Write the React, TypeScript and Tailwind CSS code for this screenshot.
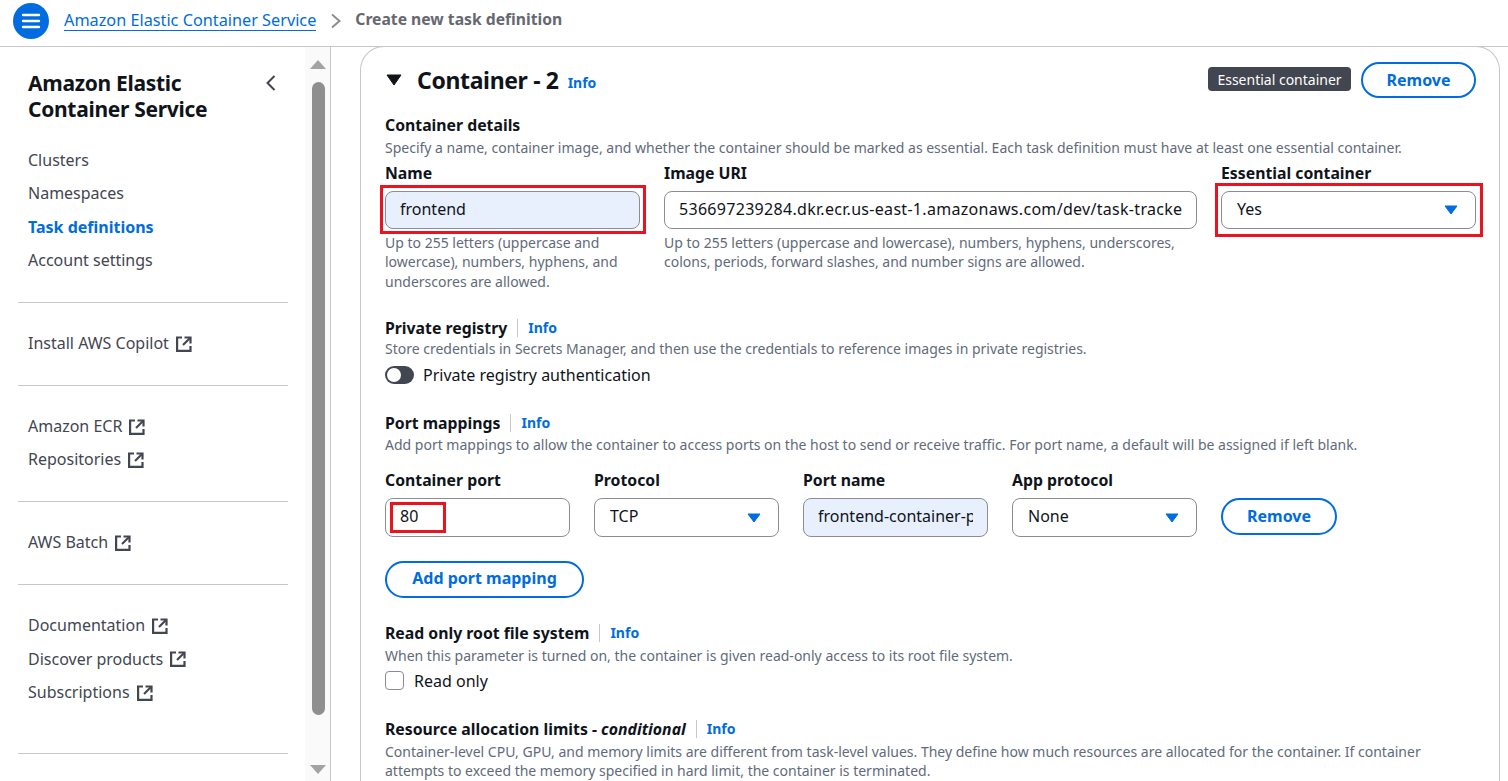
import React from "react";

const navGroups = [
  ["Install AWS Copilot"],
  ["Amazon ECR", "Repositories"],
  ["AWS Batch"],
  ["Documentation", "Discover products", "Subscriptions"],
];

function ExternalIcon() {
  return (
    <svg width="18" height="18" viewBox="0 0 18 18" fill="none" stroke="#424650" strokeWidth="2.2" className="shrink-0">
      <path d="M7 2.5H2.1v13.4h13.4V11" />
      <path d="M9.5 2.5h6v6" />
      <path d="M15 3 8 10" />
    </svg>
  );
}

function Info() {
  return <a className="text-[14px] font-bold leading-5 text-[#006ce0]">Info</a>;
}

function SectionTitle({ children }: { children: React.ReactNode }) {
  return (
    <div className="flex h-[23px] items-center">
      <span className="text-[15.8px] font-bold leading-[22px] text-[#0f141a]">{children}</span>
      <span className="mx-[10px] h-[18px] w-px bg-[#c6c6cd]" />
      <Info />
    </div>
  );
}

function Desc({ children, className }: { children: React.ReactNode; className?: string }) {
  return <p className={`text-[14px] leading-[19.5px] text-[#5f6b7a] ${className ?? ""}`}>{children}</p>;
}

function Label({ children }: { children: React.ReactNode }) {
  return <div className="text-[15.8px] font-bold leading-[22px] text-[#0f141a]">{children}</div>;
}

function Caret() {
  return (
    <svg width="14" height="10" viewBox="0 0 14 10" className="shrink-0">
      <path d="M1 1h12L7 9z" fill="#006ce0" stroke="#006ce0" strokeLinejoin="round" />
    </svg>
  );
}

function Select({ value, tall }: { value: string; tall?: boolean }) {
  return (
    <div
      className={`flex items-center justify-between rounded-lg border border-[#8c8c94] bg-white pl-[15px] pr-[17px] text-[16px] text-[#0f141a] ${
        tall ? "h-[39px]" : "h-[38px]"
      }`}
    >
      <span className={tall ? "pb-[3px]" : "pb-[2px]"}>{value}</span>
      <Caret />
    </div>
  );
}

function Input({ value, filled, tall, wide }: { value: string; filled?: boolean; tall?: boolean; wide?: boolean }) {
  return (
    <div
      className={`flex items-center rounded-lg border border-[#8c8c94] px-[14px] text-[16px] text-[#0f141a] ${
        filled ? "bg-[#e8f0fe]" : "bg-white"
      } ${tall ? "h-[39px]" : "h-[38px]"} ${wide ? "tracking-[0.3px]" : ""}`}
    >
      <span className={`block overflow-hidden whitespace-nowrap ${tall ? "pb-[3px]" : "pb-px"}`}>{value}</span>
    </div>
  );
}

function OutlineButton({ children, className }: { children: React.ReactNode; className?: string }) {
  return (
    <button
      className={`flex items-center justify-center rounded-full border-2 border-[#006ce0] bg-white text-[16px] font-bold text-[#006ce0] ${className}`}
    >
      {children}
    </button>
  );
}

function Sidebar() {
  return (
    <aside className="flex h-full w-[331px] shrink-0 border-r border-[#c6c6cd]">
      <div className="w-[305px] shrink-0 pl-[18px] pr-[17px]">
        <div className="flex items-start justify-between pl-[10px] pr-[10px] pt-[23px]">
          <h1 className="w-[200px] text-[21px] font-bold leading-[26px] tracking-[-0.3px] text-[#0f141a]">
            Amazon Elastic Container Service
          </h1>
          <svg width="16" height="18" viewBox="0 0 16 18" className="ml-[2px] mt-[4px]" fill="none" stroke="#424650" strokeWidth="2">
            <path d="M12.5 2 5.5 9l7 7" />
          </svg>
        </div>
        <nav className="pl-[10px] pt-[22px] text-[16px] leading-[33.4px] text-[#424650]">
          <div>Clusters</div>
          <div>Namespaces</div>
          <div className="font-bold text-[#006ce0]">Task definitions</div>
          <div>Account settings</div>
        </nav>
        {navGroups.map((group) => (
          <div key={group[0]} className="mt-[24.5px] border-t border-[#c6c6cd] pl-[10px] pt-[24px] text-[16px] leading-[33.4px] text-[#424650]">
            {group.map((item) => (
              <div key={item} className="flex items-center gap-[6px]">
                {item}
                <ExternalIcon />
              </div>
            ))}
          </div>
        ))}
        <div className="mt-[44px] border-t border-[#c6c6cd]" />
      </div>
      <div className="relative flex w-[25px] flex-col items-center bg-[#fafafa] pt-[13px]">
        <svg width="16" height="9" viewBox="0 0 16 9"><path d="M8 0l8 9H0z" fill="#a3a3a3" /></svg>
        <div className="ml-px mt-[13px] h-[633px] w-[13px] rounded-full bg-[#8f8f8f]" />
        <svg width="16" height="9" viewBox="0 0 16 9" className="mt-[50px]"><path d="M0 0h16L8 9z" fill="#a3a3a3" /></svg>
      </div>
    </aside>
  );
}

function ContainerCard() {
  return (
    <section className="-mt-px h-[800px] w-[1140px] rounded-t-[24px] border border-b-0 border-[#c6c6cd] bg-white pl-[24px] pr-[23px]">
      <div className="flex items-start justify-between pt-[15px]">
        <div className="flex items-center pt-[2px]">
          <svg width="16" height="12" viewBox="0 0 16 12" className="ml-px mr-[15px]">
            <path d="M1 1h14L8 11z" fill="#0f141a" stroke="#0f141a" strokeLinejoin="round" />
          </svg>
          <h2 className="text-[23px] font-bold leading-[32px] tracking-[-0.35px] text-[#0f141a]">Container - 2</h2>
          <span className="ml-[9px] mt-[4px]"><Info /></span>
        </div>
        <div className="flex items-start gap-[10px]">
          <span className="mt-[5px] flex h-[24px] w-[143px] items-center justify-center rounded bg-[#424650] text-[14px] text-white">
            Essential container
          </span>
          <OutlineButton className="h-[36px] w-[115px] pb-px">Remove</OutlineButton>
        </div>
      </div>

      <div className="pt-[16px]">
        <Label>Container details</Label>
        <Desc className="mt-[2px]">Specify a name, container image, and whether the container should be marked as essential. Each task definition must have at least one essential container.</Desc>
      </div>

      <div className="grid grid-cols-[255px_533px_255px] gap-x-[24px] pt-[4px]">
        <div>
          <Label>Name</Label>
          <div className="relative mt-[7px]">
            <Input value="frontend" filled />
            <div className="absolute -bottom-[5px] -left-[5px] -right-[6px] -top-[6px] border-[3px] border-[#e8141f]" />
          </div>
          <Desc className="mt-[4px]">Up to 255 letters (uppercase and lowercase), numbers, hyphens, and underscores are allowed.</Desc>
        </div>
        <div>
          <Label>Image URI</Label>
          <div className="mt-[7px]"><Input value="536697239284.dkr.ecr.us-east-1.amazonaws.com/dev/task-tracke" wide /></div>
          <Desc className="mt-[4px]">Up to 255 letters (uppercase and lowercase), numbers, hyphens, underscores, colons, periods, forward slashes, and number signs are allowed.</Desc>
        </div>
        <div>
          <Label>Essential container</Label>
          <div className="relative mt-[7px]">
            <Select value="Yes" />
            <div className="absolute -bottom-[8px] -left-[6px] -right-[7px] -top-[8px] border-[3px] border-[#e8141f]" />
          </div>
        </div>
      </div>

      <div className="pt-[25px]">
        <SectionTitle>Private registry</SectionTitle>
        <Desc>Store credentials in Secrets Manager, and then use the credentials to reference images in private registries.</Desc>
        <div className="mt-[4px] flex items-center gap-[9px]">
          <span className="flex h-[18px] w-[29px] items-center rounded-full bg-[#424650] pl-[2px]">
            <span className="h-[14px] w-[14px] rounded-full bg-white" />
          </span>
          <span className="text-[16px] leading-[24px] text-[#0f141a]">Private registry authentication</span>
        </div>
      </div>

      <div className="pt-[25px]">
        <SectionTitle>Port mappings</SectionTitle>
        <Desc>Add port mappings to allow the container to access ports on the host to send or receive traffic. For port name, a default will be assigned if left blank.</Desc>
      </div>

      <div className="flex items-end gap-x-[24px] pt-[15px]">
        <div className="w-[185px]">
          <Label>Container port</Label>
          <div className="relative mt-[7px]">
            <Input value="80" tall />
            <div className="absolute bottom-[4px] left-[5px] top-[4px] w-[56px] border-[3px] border-[#e8141f]" />
          </div>
        </div>
        <div className="w-[185px]">
          <Label>Protocol</Label>
          <div className="mt-[7px]"><Select value="TCP" tall /></div>
        </div>
        <div className="w-[185px]">
          <Label>Port name</Label>
          <div className="mt-[7px]"><Input value="frontend-container-p" filled tall /></div>
        </div>
        <div className="w-[185px]">
          <Label>App protocol</Label>
          <div className="mt-[7px]"><Select value="None" tall /></div>
        </div>
        <OutlineButton className="mb-[2px] h-[37px] w-[116px] pb-px">Remove</OutlineButton>
      </div>

      <OutlineButton className="mt-[24px] h-[37px] w-[199px] pb-[3px]">Add port mapping</OutlineButton>

      <div className="pt-[23px]">
        <SectionTitle>Read only root file system</SectionTitle>
        <Desc className="mt-[2px]">When this parameter is turned on, the container is given read-only access to its root file system.</Desc>
        <div className="mt-[3px] flex items-center gap-[10px]">
          <span className="h-[19px] w-[19px] rounded border border-[#8c8c94] bg-white" />
          <span className="text-[16px] leading-[24px] text-[#0f141a]">Read only</span>
        </div>
      </div>

      <div className="pt-[25px]">
        <SectionTitle>
          Resource allocation limits - <em className="font-bold">conditional</em>
        </SectionTitle>
        <Desc className="mt-px">Container-level CPU, GPU, and memory limits are different from task-level values. They define how much resources are allocated for the container. If container attempts to exceed the memory specified in hard limit, the container is terminated.</Desc>
      </div>
    </section>
  );
}

export default function App() {
  return (
    <div className="flex h-[781px] w-[1508px] flex-col overflow-hidden bg-white font-['Noto_Sans','Open_Sans',sans-serif]">
      <header className="flex h-[47px] shrink-0 items-start border-b border-[#c6c6cd] pl-[13px] pt-[3px]">
        <span className="flex h-[36px] w-[36px] items-center justify-center rounded-full bg-[#006ce0]">
          <svg width="20" height="16" viewBox="0 0 20 16" stroke="white" strokeWidth="2.4" strokeLinecap="round">
            <path d="M2 2h16M2 8h16M2 14h16" />
          </svg>
        </span>
        <a className="ml-[15px] mt-[7px] border-b border-[#006ce0] text-[16.25px] leading-[20px] text-[#006ce0]">Amazon Elastic Container Service</a>
        <svg width="12" height="16" viewBox="0 0 12 16" fill="none" stroke="#8c8c94" strokeWidth="2" className="ml-[14px] mt-[10px]">
          <path d="M2 1.5 9.5 8 2 14.5" />
        </svg>
        <span className="ml-[13px] mt-[5px] text-[15.7px] font-bold text-[#656871]">Create new task definition</span>
      </header>
      <div className="flex min-h-0 flex-1">
        <Sidebar />
        <main className="min-w-0 flex-1 overflow-hidden pl-[29px]">
          <ContainerCard />
        </main>
      </div>
    </div>
  );
}
